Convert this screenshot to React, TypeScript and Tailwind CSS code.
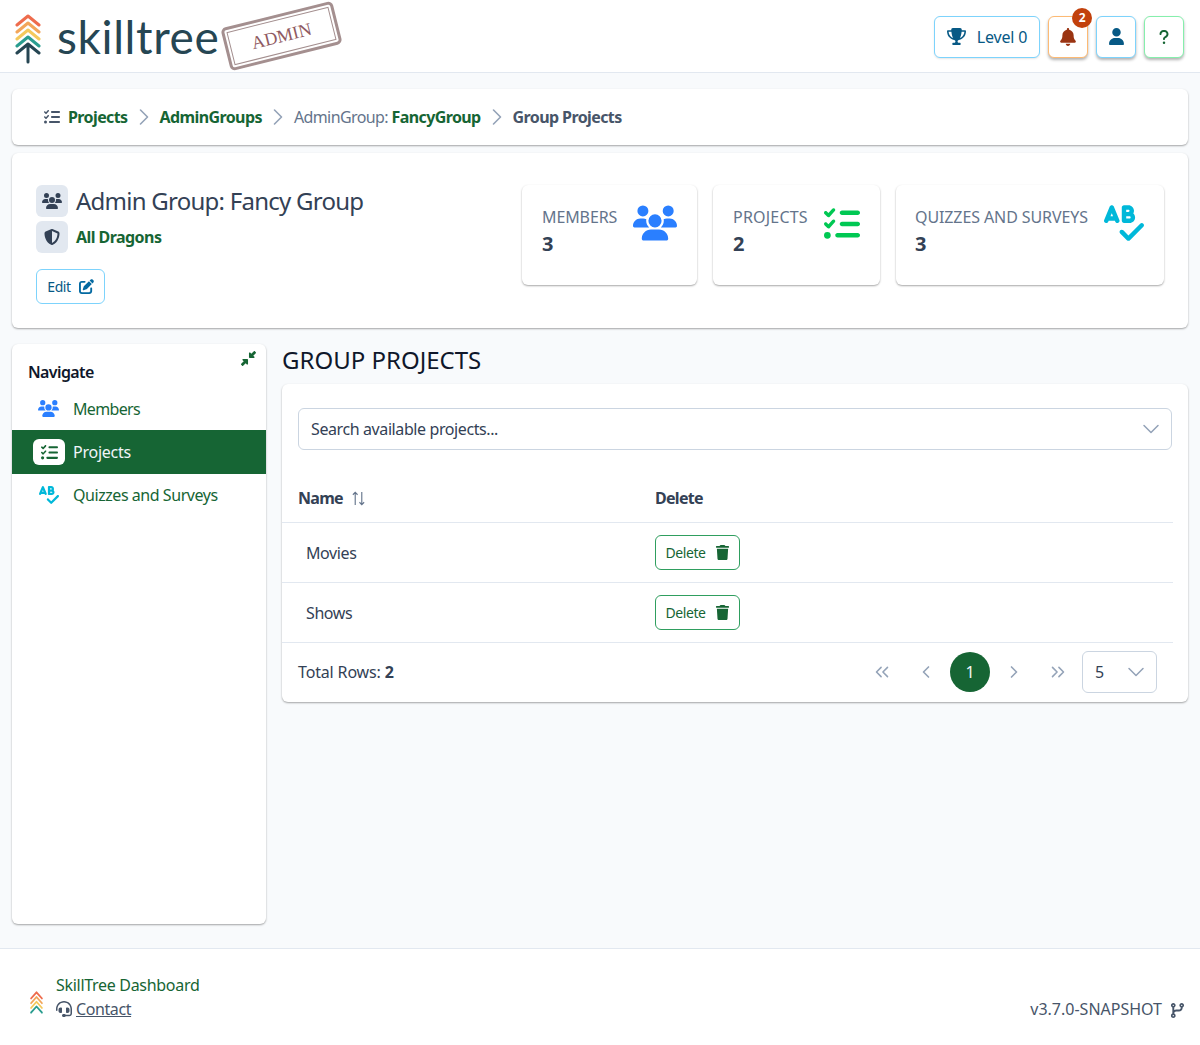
import React from 'react';
import { FaBell, FaCodeBranch, FaHeadset, FaPenToSquare, FaQuestion, FaShieldHalved, FaSpellCheck, FaTrash, FaTrophy, FaUser, FaUsers, FaListCheck, FaDownLeftAndUpRightToCenter } from 'react-icons/fa6';
import { ChevronDown, ChevronLeft, ChevronRight, ChevronsLeft, ChevronsRight } from 'lucide-react';

const Logo = ({ trunk = true, className }: { trunk?: boolean; className: string }) => (
  <svg viewBox={trunk ? '0 0 26 50' : '0 0 26 34'} preserveAspectRatio="none" className={className} fill="none" strokeWidth="3" strokeLinecap="round" strokeLinejoin="round">
    <path d="M2 11 13 2l11 9" stroke="#ee6c4d" />
    <path d="M2 18 13 9l11 9" stroke="#f2a65a" />
    <path d="M2 25 13 16l11 9" stroke="#f4c95d" />
    <path d="M2 32 13 23l11 9" stroke="#2a9d8f" />
    {trunk && <path d="M2 39 13 30l11 9M13 31v17" stroke="#264653" />}
  </svg>
);

const StatCard = ({ title, value, icon, className }: { title: string; value: string; icon: React.ReactNode; className: string }) => (
  <div className={`h-[100px] rounded-md bg-white shadow-[0_1px_2px_rgba(0,0,0,0.35)] pr-5 pt-5 flex justify-between ${className}`}>
    <div>
      <div className="text-[16px] leading-[24px] text-[#64748b]">{title}</div>
      <div className="text-[20px] leading-[30px] font-bold text-[#334155]">{value}</div>
    </div>
    {icon}
  </div>
);

const SortIcon = () => (
  <svg viewBox="0 0 16 16" className="w-[15px] h-[15px] ml-2 mt-[2px] text-[#64748b]" fill="none" stroke="currentColor" strokeWidth="1.2">
    <path d="M4.5 15V1.5M2 4l2.5-2.5L7 4M11.5 1v13.5M9 12l2.5 2.5L14 12" />
  </svg>
);

const Crumb = () => <ChevronRight className="w-7 h-7 mx-[2px] text-[#94a3b8]" strokeWidth={1.4} />;

const DeleteRow = ({ name }: { name: string }) => (
  <div className="h-[60px] flex items-center border-b border-[#e2e8f0] mr-[15px]">
    <div className="w-[373px] pl-6 text-[#334155]">{name}</div>
    <button className="h-[35px] w-[85px] rounded-md border border-[#2f9e5f] flex items-center justify-center gap-[9px] text-[14px] text-[#166534]">
      Delete <FaTrash className="text-[15px] -mt-[1px]" />
    </button>
  </div>
);

export default function App() {
  return (
    <div className="min-h-[1045px] bg-[#f8fafc] font-['Noto_Sans',sans-serif] text-[16px] tracking-[-0.4px] flex flex-col">
      <header className="h-[73px] bg-white border-b border-[#e2e8f0] flex items-center justify-between pl-[15px] pr-4">
        <div className="flex items-center">
          <Logo className="w-[26px] h-[50px] mt-[6px]" />
          <span className="ml-[16px] mt-[1px] font-['Lato',sans-serif] text-[46px] leading-none text-[#264653] tracking-[0.6px]">skilltree</span>
          <div className="ml-[5px] -mt-[1px] w-[115px] h-[44px] -rotate-[14deg] rounded-[5px] border-[3px] border-[#a48f8f] p-[2px]">
            <div className="w-full h-full border border-[#a48f8f] flex items-center justify-center font-['Liberation_Serif',serif] tracking-normal text-[18px] text-[#8f5a62]">ADMIN</div>
          </div>
        </div>
        <div className="flex items-center gap-2 mt-[1px]">
          <button className="h-[42px] w-[106px] rounded-md border border-[#7dd3fc] bg-white text-[#075985] flex items-center justify-center gap-[11px] tracking-[-0.2px] shadow-[0_1px_2px_rgba(0,0,0,0.1)]">
            <FaTrophy className="text-[19px] text-[#075985]" /> Level 0
          </button>
          <div className="relative">
            <button className="h-[42px] w-10 rounded-md border border-[#fdba74] bg-white flex items-center justify-center shadow-[0_2px_3px_rgba(0,0,0,0.3)]">
              <FaBell className="text-[18px] text-[#9a3412]" />
            </button>
            <span className="absolute -top-[8px] left-[24px] w-5 h-5 rounded-full bg-[#c2410c] text-white text-[12px] font-bold flex items-center justify-center">2</span>
          </div>
          <button className="h-[42px] w-10 rounded-md border border-[#7dd3fc] bg-white flex items-center justify-center shadow-[0_2px_3px_rgba(0,0,0,0.3)]">
            <FaUser className="text-[17px] text-[#075985]" />
          </button>
          <button className="h-[42px] w-10 rounded-md border border-[#86efac] bg-white flex items-center justify-center shadow-[0_2px_3px_rgba(0,0,0,0.3)]">
            <FaQuestion className="text-[16px] text-[#166534]" />
          </button>
        </div>
      </header>

      <main className="px-3 pt-4 flex-1">
        <nav className="h-[56px] rounded-md bg-white shadow-[0_1px_2px_rgba(0,0,0,0.35)] flex items-center pl-[32px] tracking-[-0.6px]">
          <FaListCheck className="text-[16px] text-[#475569] mr-2" />
          <span className="font-bold text-[#166534]">Projects</span>
          <Crumb />
          <span className="font-bold text-[#166534]">AdminGroups</span>
          <Crumb />
          <span className="text-[#64748b]">AdminGroup:&nbsp;</span>
          <span className="font-bold text-[#166534]">FancyGroup</span>
          <Crumb />
          <span className="font-bold text-[#475569]">Group Projects</span>
        </nav>

        <section className="mt-2 h-[175px] rounded-md bg-white shadow-[0_1px_2px_rgba(0,0,0,0.35)] flex justify-between pl-6 pr-6 pt-8">
          <div>
            <div className="h-8 flex items-center gap-2">
              <span className="w-8 h-8 rounded-md bg-[#e2e8f0] flex items-center justify-center"><FaUsers className="text-[20px] text-[#334155]" /></span>
              <span className="text-[24px] leading-8 text-[#334155] tracking-[-0.75px]">Admin Group: Fancy Group</span>
            </div>
            <div className="flex items-center gap-2 mt-1">
              <span className="w-8 h-8 rounded-md bg-[#e2e8f0] flex items-center justify-center"><FaShieldHalved className="text-[16px] text-[#334155]" /></span>
              <span className="font-bold text-[#166534] tracking-[-0.55px]">All Dragons</span>
            </div>
            <button className="mt-4 h-[35px] w-[69px] rounded-md border border-[#7dd3fc] text-[14px] text-[#075985] flex items-center justify-center gap-2">
              Edit <FaPenToSquare className="text-[15px] text-[#0369a1]" />
            </button>
          </div>
          <div className="flex gap-4">
            <StatCard
              title="MEMBERS"
              value="3"
              className="w-[175px] pl-5 tracking-[-0.1px]"
              icon={<FaUsers className="text-[#2a7fff] w-[44px] h-[44px] -mt-[4px]" />}
            />
            <StatCard
              title="PROJECTS"
              value="2"
              className="w-[167px] pl-5 tracking-[0.2px]"
              icon={<FaListCheck className="text-[#00c853] w-9 h-9 mt-[1px]" />}
            />
            <StatCard
              title="QUIZZES AND SURVEYS"
              value="3"
              className="w-[268px] pl-[19px] tracking-[-0.1px]"
              icon={<FaSpellCheck className="text-[#00b8d9] w-[40px] h-[40px] -mt-[2px]" />}
            />
          </div>
        </section>

        <div className="mt-4 flex gap-4 items-start">
          <aside className="relative w-[254px] h-[580px] shrink-0 rounded-md bg-white shadow-[0_1px_2px_rgba(0,0,0,0.35)]">
            <FaDownLeftAndUpRightToCenter className="absolute top-[7px] right-[10px] text-[15px] text-[#166534]" />
            <div className="pl-4 pt-4 h-[43px] font-semibold text-[#0f172a] leading-6 tracking-[-0.6px]">Navigate</div>
            <div className="h-[43px] flex items-center text-[#166534] tracking-[-0.65px]">
              <span className="w-[61px] flex justify-center pl-[12px]"><FaUsers className="text-[#2a7fff] text-[21px]" /></span>
              Members
            </div>
            <div className="h-[44px] flex items-center bg-[#166534] text-[#f1f5f9] tracking-[-0.25px]">
              <span className="ml-[21px] w-8 h-[26px] rounded-md bg-white flex items-center justify-center mr-2"><FaListCheck className="text-[#166534] text-[17px]" /></span>
              Projects
            </div>
            <div className="h-[43px] pb-[2px] flex items-center text-[#166534] tracking-[-0.45px]">
              <span className="w-[61px] flex justify-center pl-[12px]"><FaSpellCheck className="text-[#00b8d9] text-[20px]" /></span>
              Quizzes and Surveys
            </div>
          </aside>

          <div className="flex-1 min-w-0">
            <h1 className="text-[24px] leading-[32px] text-[#0f172a] tracking-normal">GROUP PROJECTS</h1>
            <div className="mt-2 h-[318px] rounded-md bg-white shadow-[0_1px_2px_rgba(0,0,0,0.35)]">
              <div className="pt-6 px-4">
                <div className="h-[42px] rounded-md border border-[#cbd5e1] flex items-center justify-between pl-3 pr-[6px] text-[#334155]">
                  Search available projects...
                  <ChevronDown className="w-7 h-7 text-[#94a3b8]" strokeWidth={1.3} />
                </div>
              </div>
              <div className="mt-[15px] h-[58px] flex items-center border-b border-[#e2e8f0] mr-[15px] pt-2 font-bold text-[#334155] tracking-[-0.7px]">
                <div className="w-[373px] pl-4 flex items-center">Name <SortIcon /></div>
                <div>Delete</div>
              </div>
              <DeleteRow name="Movies" />
              <DeleteRow name="Shows" />
              <div className="h-[59px] flex items-center justify-between pl-4 pr-[31px] pb-[2px] text-[#334155]">
                <div className="tracking-[-0.15px]">Total Rows: <b>2</b></div>
                <div className="flex items-center text-[#94a3b8]">
                  <span className="w-11 flex justify-center"><ChevronsLeft className="w-[22px] h-[22px]" strokeWidth={1.7} /></span>
                  <span className="w-11 flex justify-center"><ChevronLeft className="w-5 h-5" strokeWidth={2} /></span>
                  <span className="mx-[2px] w-10 h-10 rounded-full bg-[#166534] text-[#f1f5f9] flex items-center justify-center">1</span>
                  <span className="w-11 flex justify-center"><ChevronRight className="w-5 h-5" strokeWidth={2} /></span>
                  <span className="w-11 flex justify-center"><ChevronsRight className="w-[22px] h-[22px]" strokeWidth={1.7} /></span>
                  <div className="ml-[2px] w-[75px] h-[42px] rounded-md border border-[#cbd5e1] flex items-center justify-between pl-3 pr-[6px] text-[#334155]">
                    5
                    <ChevronDown className="w-7 h-7 text-[#94a3b8]" strokeWidth={1.3} />
                  </div>
                </div>
              </div>
            </div>
          </div>
        </div>
      </main>

      <footer className="mt-6 h-[97px] bg-white border-t border-[#e2e8f0] flex items-end justify-between pl-[30px] pr-[15px] pb-6">
        <div className="flex items-center">
          <Logo trunk={false} className="w-[13px] h-[23px] mt-[10px]" />
          <div className="ml-[13px] leading-6">
            <div className="text-[#166534] tracking-[-0.3px]">SkillTree Dashboard</div>
            <div className="flex items-center text-[#475569]"><FaHeadset className="text-[16px] mr-1" /><span className="underline">Contact</span></div>
          </div>
        </div>
        <div className="flex items-center text-[#475569] leading-6 tracking-normal">
          v3.7.0-SNAPSHOT <FaCodeBranch className="ml-2 text-[15px] mt-[3px]" />
        </div>
      </footer>
    </div>
  );
}
